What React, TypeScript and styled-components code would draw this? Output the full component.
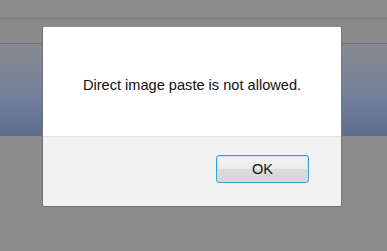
import styled, { createGlobalStyle } from "styled-components";

const GlobalStyle = createGlobalStyle`
    html, body {
        margin: 0;
        padding: 0;
        background: #8b8b8b;
        font-family: "Liberation Sans", Arial, sans-serif;
    }
`;

const Page = styled.div`
    position: relative;
    width: 387px;
    height: 251px;
    overflow: hidden;
    display: flex;
    flex-direction: column;
    background: #8b8b8b;
`;
const TopStrip = styled.div`
    height: 18px;
    border-bottom: 1px solid #7f7f7f;
    background: #8b8b8b;
`;
const Toolbar = styled.div`
    height: 24px;
    border-bottom: 1px solid #6c7081;
    background: #8a8a8b;
`;
const Banner = styled.div`
    height: 92px;
    background: linear-gradient(to bottom, #878a91 0%, #75809a 55%, #5e6d90 100%);
`;
const Rest = styled.div`
    flex: 1;
    background: #8b8b8b;
`;

const Dialog = styled.div`
    position: absolute;
    left: 42px;
    top: 26px;
    width: 298px;
    height: 179px;
    border: 1px solid #6f6f6f;
    border-top-color: #8f8f8f;
    border-right-color: #7a7a7a;
    border-radius: 3px;
    overflow: hidden;
    display: flex;
    flex-direction: column;
    background: #ffffff;
`;
const Body = styled.div`
    height: 110px;
    box-sizing: border-box;
    padding-top: 50px;
    text-align: center;
    font-size: 14.6px;
    line-height: 16px;
    color: #111;
    background: #ffffff;
    border-bottom: 1px solid #e6e6e6;
`;
const Footer = styled.div`
    flex: 1;
    background: #f2f2f2;
    display: flex;
    justify-content: flex-end;
    align-items: flex-start;
    padding: 18px 32px 0 0;
`;
const Button = styled.button`
    width: 93px;
    height: 28px;
    box-sizing: border-box;
    border: 1px solid #3c9fd6;
    border-radius: 3px;
    box-shadow: inset 0 0 0 1px #bfe3f6;
    background: linear-gradient(to bottom, #f3f3f3 0%, #ececec 50%, #dcdcdc 51%, #d6d6d6 100%);
    font-family: "Liberation Sans", Arial, sans-serif;
    font-size: 14.6px;
    color: #111;
    padding: 0;
    cursor: pointer;
`;

export default function App(){
    return(
        <>
            <GlobalStyle/>
            <Page>
                <TopStrip/>
                <Toolbar/>
                <Banner/>
                <Rest/>
                <Dialog>
                    <Body>Direct image paste is not allowed.</Body>
                    <Footer>
                        <Button>OK</Button>
                    </Footer>
                </Dialog>
            </Page>
        </>
    );
}
